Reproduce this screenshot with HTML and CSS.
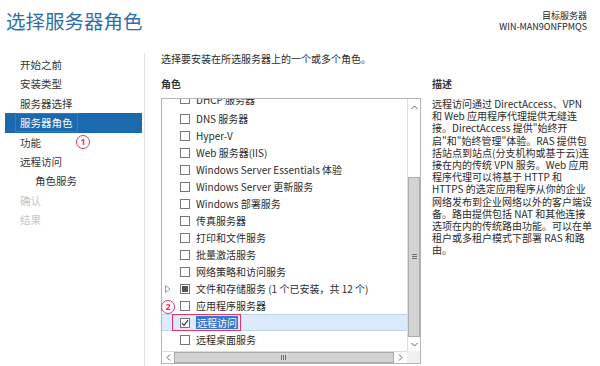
FILE: index.html
```html
<!DOCTYPE html>
<html lang="zh-CN">
<head>
  <meta charset="UTF-8">
  <title>选择服务器角色</title>
  <link rel="stylesheet" href="styles.css">
</head>
<body>
  <div class="header">
    <h1>选择服务器角色</h1>
    <div class="target">
      <div>目标服务器</div>
      <div>WIN-MAN9ONFPMQS</div>
    </div>
  </div>

  <div class="wizard">
    <nav class="steps">
      <div class="step">开始之前</div>
      <div class="step">安装类型</div>
      <div class="step">服务器选择</div>
      <div class="step active"><span class="mark">服务器角色</span><span class="badge badge-1">1</span></div>
      <div class="step">功能</div>
      <div class="step">远程访问</div>
      <div class="step sub">角色服务</div>
      <div class="step disabled">确认</div>
      <div class="step disabled">结果</div>
    </nav>

    <div class="content">
      <p class="intro">选择要安装在所选服务器上的一个或多个角色。</p>
      <div class="columns">
        <section class="roles">
          <h2>角色</h2>
          <div class="listbox">
            <div class="list-view">
              <ul class="role-list">
                <li class="role"><span class="check"></span>DHCP 服务器</li>
                <li class="role"><span class="check"></span>DNS 服务器</li>
                <li class="role"><span class="check"></span>Hyper-V</li>
                <li class="role"><span class="check"></span>Web 服务器(IIS)</li>
                <li class="role"><span class="check"></span>Windows Server Essentials 体验</li>
                <li class="role"><span class="check"></span>Windows Server 更新服务</li>
                <li class="role"><span class="check"></span>Windows 部署服务</li>
                <li class="role"><span class="check"></span>传真服务器</li>
                <li class="role"><span class="check"></span>打印和文件服务</li>
                <li class="role"><span class="check"></span>批量激活服务</li>
                <li class="role"><span class="check"></span>网络策略和访问服务</li>
                <li class="role">
                  <svg class="expander" width="6" height="8" viewBox="0 0 6 8"><path d="M0.5 0.5 L5 4 L0.5 7.5 Z" fill="none" stroke="#9a9a9a"/></svg>
                  <span class="check partial"></span>文件和存储服务 (1 个已安装，共 12 个)
                </li>
                <li class="role"><span class="check"></span>应用程序服务器</li>
                <li class="role selected">
                  <span class="check checked">
                    <svg width="8" height="8" viewBox="0 0 8 8"><path d="M1 4.2 L3 6.3 L7 1.2" fill="none" stroke="#333" stroke-width="1.2"/></svg>
                  </span><span class="hl">远程访问</span>
                  <span class="mark-row"></span>
                </li>
                <li class="role"><span class="check"></span>远程桌面服务</li>
              </ul>
            </div>
            <div class="vscroll">
              <div class="arrow">
                <svg width="7" height="5" viewBox="0 0 7 5"><path d="M0.5 4 L3.5 1 L6.5 4" fill="none" stroke="#606060"/></svg>
              </div>
              <div class="track-top"></div>
              <div class="thumb">
                <svg width="5" height="6" viewBox="0 0 5 6"><path d="M0 0.5 H5 M0 2.5 H5 M0 4.5 H5" stroke="#707070"/></svg>
              </div>
              <div class="arrow">
                <svg width="7" height="5" viewBox="0 0 7 5"><path d="M0.5 1 L3.5 4 L6.5 1" fill="none" stroke="#606060"/></svg>
              </div>
            </div>
            <div class="hscroll">
              <div class="arrow">
                <svg width="5" height="7" viewBox="0 0 5 7"><path d="M4 0.5 L1 3.5 L4 6.5" fill="none" stroke="#606060"/></svg>
              </div>
              <div class="thumb">
                <svg width="6" height="5" viewBox="0 0 6 5"><path d="M0.5 0 V5 M2.5 0 V5 M4.5 0 V5" stroke="#707070"/></svg>
              </div>
              <div class="arrow">
                <svg width="5" height="7" viewBox="0 0 5 7"><path d="M1 0.5 L4 3.5 L1 6.5" fill="none" stroke="#606060"/></svg>
              </div>
            </div>
            <div class="corner"></div>
          </div>
          <span class="badge badge-2">2</span>
        </section>

        <section class="desc">
          <h2>描述</h2>
          <p>远程访问通过 DirectAccess、VPN<br>
          和 Web 应用程序代理提供无缝连<br>
          接。DirectAccess 提供"始终开<br>
          启"和"始终管理"体验。RAS 提供包<br>
          括站点到站点(分支机构或基于云)连<br>
          接在内的传统 VPN 服务。Web 应用<br>
          程序代理可以将基于 HTTP 和<br>
          HTTPS 的选定应用程序从你的企业<br>
          网络发布到企业网络以外的客户端设<br>
          备。路由提供包括 NAT 和其他连接<br>
          选项在内的传统路由功能。可以在单<br>
          租户或多租户模式下部署 RAS 和路<br>
          由。</p>
        </section>
      </div>
    </div>
  </div>
</body>
</html>
```

FILE: styles.css
```css
* {
  box-sizing: border-box;
  margin: 0;
  padding: 0;
}

body {
  width: 600px;
  height: 366px;
  overflow: hidden;
  background: #ffffff;
  color: #2b2b2b;
  font-family: "Noto Sans CJK SC", "Noto Sans", sans-serif;
  font-size: 10px;
}

.header {
  height: 53px;
  display: flex;
  justify-content: space-between;
  align-items: flex-start;
}

h1 {
  font-size: 19.5px;
  font-weight: 400;
  line-height: 24px;
  color: #2f6fa6;
  padding: 9px 0 0 6px;
}

.target {
  padding: 10px 13px 0 0;
  text-align: right;
  font-size: 9px;
  line-height: 11px;
  color: #222;
}

.wizard {
  display: flex;
  height: 313px;
}

/* Left step list */
.steps {
  width: 145px;
  flex-shrink: 0;
  border-right: 1px solid #e2e2e2;
  padding-top: 2px;
}

.step {
  position: relative;
  height: 19.4px;
  line-height: 19.4px;
  margin: 0 2px 0 5px;
  padding-left: 15px;
  font-size: 10.5px;
  color: #333;
}

.step.sub {
  padding-left: 30px;
}

.step.disabled {
  color: #c4c4c4;
}

.step.active {
  background: #1b6ab0;
  color: #fff;
}

.step .mark {
  position: absolute;
  left: 10px;
  top: 0;
  height: 19px;
  padding: 0 4px;
  border: 1px solid #e0356a;
  line-height: 17px;
}

.badge {
  position: absolute;
  width: 14px;
  height: 14px;
  border: 1px solid #e0356a;
  border-radius: 50%;
  color: #e0356a;
  background: #fff;
  font-family: "Noto Sans", sans-serif;
  font-size: 9px;
  font-weight: 700;
  line-height: 12px;
  text-align: center;
}

.badge-1 {
  left: 71px;
  top: 22px;
}

.badge-2 {
  left: 0;
  top: 222px;
}

/* Main area */
.content {
  flex: 1;
  padding-left: 16px;
}

.intro {
  line-height: 12px;
}

.columns {
  display: flex;
  margin-top: 13px;
}

h2 {
  font-size: 10px;
  font-weight: 700;
  line-height: 12px;
  color: #333;
  margin-bottom: 8px;
}

.roles {
  position: relative;
  width: 260px;
  flex-shrink: 0;
}

.listbox {
  width: 260px;
  height: 266px;
  border: 1px solid #b5b5b5;
  display: grid;
  grid-template-columns: 1fr 13px;
  grid-template-rows: 1fr 12px;
}

.list-view {
  overflow: hidden;
}

.role-list {
  list-style: none;
  margin-top: -7px;
}

.role {
  position: relative;
  height: 17px;
  display: flex;
  align-items: center;
  padding-left: 18px;
  white-space: nowrap;
  color: #2b2b2b;
}

.role:first-child {
  height: 18px;
  align-items: flex-start;
}

.role:first-child .check {
  margin-top: 2px;
}

.role .expander {
  position: absolute;
  left: 3px;
  top: 5px;
}

.check {
  width: 10px;
  height: 10px;
  border: 1px solid #777;
  background: #fff;
  margin-right: 6px;
  flex-shrink: 0;
  display: flex;
  align-items: center;
  justify-content: center;
}

.check.partial::after {
  content: "";
  width: 6px;
  height: 6px;
  background: #555;
}

.role.selected {
  background: #dcebfb;
  border-top: 1px solid #bcd5f1;
  border-bottom: 1px solid #bcd5f1;
}

.hl {
  background: #3478d4;
  color: #fff;
  padding: 0 1px;
  line-height: 13px;
}

.mark-row {
  position: absolute;
  left: 10px;
  top: -1px;
  width: 69px;
  height: 17px;
  border: 1px solid #e0356a;
}

/* Scroll bars */
.vscroll {
  display: flex;
  flex-direction: column;
  border-left: 1px solid #dcdcdc;
}

.vscroll .arrow {
  height: 16px;
  display: flex;
  align-items: center;
  justify-content: center;
}

.vscroll .arrow:last-child {
  height: 14px;
}

.track-top {
  height: 62px;
}

.vscroll .thumb {
  height: 160px;
  background: #d3d3d3;
  border: 1px solid #ababab;
  display: flex;
  align-items: center;
  justify-content: center;
}

.hscroll {
  display: flex;
  align-items: stretch;
  border-top: 1px solid #dcdcdc;
}

.hscroll .arrow {
  width: 12px;
  display: flex;
  align-items: center;
  justify-content: center;
}

.hscroll .arrow:last-child {
  width: 13px;
}

.hscroll .thumb {
  flex: 1;
  background: #d3d3d3;
  border: 1px solid #ababab;
  display: flex;
  align-items: center;
  justify-content: center;
}

.corner {
  background: #f0f0f0;
}

/* Description */
.desc {
  margin-left: 11px;
  width: 167px;
}

.desc p {
  font-size: 10px;
  line-height: 12.2px;
  white-space: nowrap;
}
```
